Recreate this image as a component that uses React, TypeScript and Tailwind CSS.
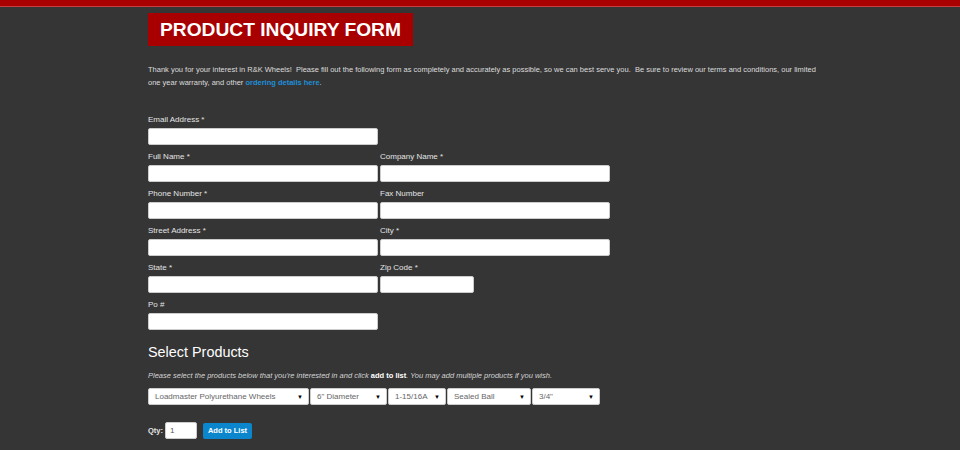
const font = { fontFamily: '"Liberation Sans", Arial, sans-serif' };

type Field = { label: string; width?: string };

const rows: Field[][] = [
  [{ label: 'Email Address *' }],
  [{ label: 'Full Name *' }, { label: 'Company Name *' }],
  [{ label: 'Phone Number *' }, { label: 'Fax Number' }],
  [{ label: 'Street Address *' }, { label: 'City *' }],
  [{ label: 'State *' }, { label: 'Zip Code *', width: 'w-[94px]' }],
  [{ label: 'Po #' }],
];

const selects = [
  { text: 'Loadmaster Polyurethane Wheels', width: 'w-[161px]' },
  { text: '6" Diameter', width: 'w-[77px]' },
  { text: '1-15/16A', width: 'w-[58px]' },
  { text: 'Sealed Ball', width: 'w-[84px]' },
  { text: '3/4"', width: 'w-[68px]' },
];

function FormField({ label, width }: Field) {
  return (
    <div className="flex w-[230px] flex-col">
      <label className="h-[12px] text-[8px] leading-[12px] text-[#e4e4e4]">
        {label}
      </label>
      <input
        type="text"
        className={`mt-[2px] h-[17px] rounded-[2px] border border-[#ccc] bg-white outline-none ${width ?? 'w-[230px]'}`}
      />
    </div>
  );
}

function FakeSelect({ text, width }: { text: string; width: string }) {
  return (
    <div
      className={`flex h-[17px] items-center justify-between rounded-[2px] border border-[#ccc] bg-white pl-[6px] pr-[5px] ${width}`}
    >
      <span className="text-[8px] leading-none text-[#666]">{text}</span>
      <span className="text-[6px] leading-none text-black">▼</span>
    </div>
  );
}

export default function App() {
  return (
    <div className="min-h-[450px] w-full bg-[#353535]" style={font}>
      <div className="h-[7px] border-b border-[#c84040] bg-[#a80000]" />

      <div className="pl-[148px] pt-[6px]">
        <div className="inline-flex h-[33px] items-center bg-[#a80000] px-[12px]">
          <h1 className="text-[19.2px] font-bold leading-none text-white">
            PRODUCT INQUIRY FORM
          </h1>
        </div>

        <p className="mt-[17px] w-[670px] whitespace-pre-wrap text-[7.5px] leading-[13px] text-[#dcdcdc]">
          {'Thank you for your interest in R&K Wheels!  Please fill out the following form as completely and accurately as possible, so we can best serve you.  Be sure to review our terms and conditions, our limited one year warranty, and other '}
          <a className="font-bold text-[#1e8fd8]">ordering details here</a>.
        </p>

        <div className="mt-[25px] flex flex-col gap-[6px]">
          {rows.map((row, i) => (
            <div key={i} className="flex gap-[2px]">
              {row.map(f => (
                <FormField key={f.label} {...f} />
              ))}
            </div>
          ))}
        </div>

        <h2 className="mt-[14px] text-[14.4px] leading-[16px] text-white">
          Select Products
        </h2>
        <p className="mt-[10px] text-[7.5px] italic leading-[12px] text-[#d4d4d4]">
          Please select the products below that you're interested in and click{' '}
          <span className="font-bold not-italic text-white">add to list</span>.
          You may add multiple products if you wish.
        </p>

        <div className="mt-[6px] flex gap-[1px]">
          {selects.map(s => (
            <FakeSelect key={s.text} {...s} />
          ))}
        </div>

        <div className="mt-[17px] flex items-center">
          <span className="text-[7.5px] font-bold text-[#e4e4e4]">Qty:</span>
          <input
            type="text"
            defaultValue="1"
            className="ml-[2px] h-[17px] w-[32px] rounded-[2px] border border-[#ccc] bg-white pl-[4px] text-[8px] text-[#555] outline-none"
          />
          <button className="ml-[6px] h-[16px] w-[49px] rounded-[2px] bg-[#0b86cd] text-[7.5px] font-bold text-white">
            Add to List
          </button>
        </div>
      </div>
    </div>
  );
}
